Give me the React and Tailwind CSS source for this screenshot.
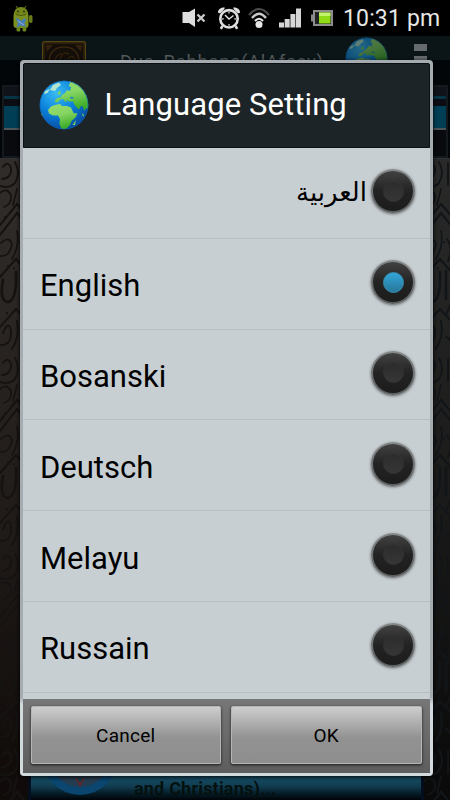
import React, { useState } from "react";

const languages = [
  { name: "العربية", rtl: true },
  { name: "English" },
  { name: "Bosanski" },
  { name: "Deutsch" },
  { name: "Melayu" },
  { name: "Russain" },
];

const Globe = ({ className, id }) => (
  <svg viewBox="0 0 50 50" className={className}>
    <defs>
      <radialGradient id={`${id}-sea`} cx="0.35" cy="0.25" r="0.8">
        <stop offset="0" stopColor="#3bbcf3" />
        <stop offset="0.5" stopColor="#0b83dc" />
        <stop offset="1" stopColor="#07489f" />
      </radialGradient>
      <linearGradient id={`${id}-land`} x1="0" y1="0" x2="0.3" y2="1">
        <stop offset="0" stopColor="#97dd72" />
        <stop offset="0.5" stopColor="#86d562" />
        <stop offset="1" stopColor="#3fae2a" />
      </linearGradient>
      <clipPath id={`${id}-clip`}>
        <circle cx="25" cy="25" r="24.3" />
      </clipPath>
    </defs>
    <circle cx="25" cy="25" r="24.3" fill={`url(#${id}-sea)`} />
    <g clipPath={`url(#${id}-clip)`}>
      {/* europe and asia */}
      <path
        d="M30 0 L31 3 L29.500 6 L32 7 L31 11 L28 10 L26 13 L23 15 L21.500 17.500 L18.500 18 L16 20 L16.500 22.500 L19 22 L21.500 19.500 L24 19 L26 21.500 L28 22 L27 19.500 L30 21.500 L34 21.500 L35 24 L38 28 L40 29.500 L41.500 26.500 L43.500 26 L45.500 31 L47 28 L50 30 L50 6 L40 0 Z"
        fill={`url(#${id}-land)`}
      />
      {/* africa */}
      <path
        d="M12 26.500 L16 25 L21 24 L23 26 L28 26 L32 27.500 L34.500 33 L38.500 33.500 L36.500 37.500 L32.500 41 L31 45 L27 49 L22.500 49 L20.500 44 L21 39 L19 35.500 L14 35.500 L10 33.500 L9 30 Z"
        fill={`url(#${id}-land)`}
      />
      <path d="M14 5 L20 2.500 L22 5 L18 8 L16 11 L11 10 Z M6 11 L11 9 L8.500 13 L5 14 Z" fill="#b5e5cf" />
      <path d="M18.500 13 L21 10.500 L22 14 L19.500 15 Z M33.500 45 L37 40 L36 45 Z M43 33 L45 35 L44 37 Z M1 32 L4 35 L3 38 Z" fill="#79d159" />
      <path d="M31 17.500 L34.500 18" stroke="#1b84c8" strokeWidth="1.4" />
    </g>
    <circle cx="25" cy="25" r="24" fill="none" stroke="#0b62b4" strokeOpacity="0.6" />
  </svg>
);

const StatusBar = () => (
  <div className="h-9 bg-black flex items-center shrink-0">
    <svg viewBox="0 0 21 27" className="w-[21px] h-[27px] ml-3">
      <path d="M4 1 L6 4 M14 1 L12 4" stroke="#6b8217" />
      <path d="M1.5 11 Q2 2 9 2 Q16 2 16.5 11 Z" fill="#72861c" />
      <rect x="1.5" y="9" width="15" height="14" rx="3" fill="#7a9020" />
      <rect x="17" y="10" width="3.5" height="8" rx="1.7" fill="#677b18" />
      <rect x="4.500" y="21" width="3.800" height="5.5" rx="1.5" fill="#6d841b" />
      <rect x="10.500" y="21" width="3.800" height="5.5" rx="1.5" fill="#6d841b" />
      <circle cx="6" cy="6.500" r="0.9" fill="#24300b" />
      <circle cx="12" cy="6.500" r="0.9" fill="#24300b" />
      <path d="M4 9.500 Q9 11.500 14 9.500" fill="none" stroke="#47560f" />
      <path d="M3.5 13 L7 14 L9 16 L12 13.500 L14.500 14 L12.500 18 L14 22 L9 20.500 L4.500 22.500 L6 18 Z" fill="#477dbb" />
      <path d="M6 16 L12 20" stroke="#8fb5d8" />
    </svg>
    <svg viewBox="0 0 24 20" className="w-6 h-5 ml-[149px]">
      <path d="M0.500 4 H7 L13 0.500 V19 L7 15 H0.500 Z" fill="#dedede" />
      <path d="M15.5 6.500 L22.5 13.500 M22.5 6.500 L15.5 13.500" stroke="#c9c9c9" strokeWidth="2.4" />
    </svg>
    <svg viewBox="0 0 24 24" className="w-6 h-6 ml-[11px]" fill="none" stroke="#dedede">
      <circle cx="12" cy="12.800" r="8.700" strokeWidth="2.600" />
      <path d="M8 9 L12 13 L16.500 9.500" strokeWidth="1.500" />
      <path d="M12 6 V7.500 M5 12.800 H6.700 M17.300 12.800 H19 M12 18 V19.700" strokeWidth="1.200" />
      <path d="M0.800 6.500 Q1.500 1.500 7.500 1.300 L7.500 3 L3 7.500 Z M23.200 6.500 Q22.500 1.500 16.500 1.300 L16.500 3 L21 7.500 Z" fill="#dedede" stroke="none" />
      <path d="M5.500 20 L3.800 22.800 M18.500 20 L20.200 22.800" strokeWidth="2.600" />
    </svg>
    <svg viewBox="0 0 22 22" className="w-[22px] h-[22px] ml-[7px]" fill="none">
      <path d="M1 8 Q11 -4 21 8" stroke="#4c4c4c" strokeWidth="2.200" />
      <path d="M4 11 Q11 2.500 18 11" stroke="#c9c9c9" strokeWidth="2.400" />
      <path d="M7 14 Q11 9.500 15 14" stroke="#e6e6e6" strokeWidth="2.200" />
      <circle cx="11" cy="17.500" r="3.500" fill="#e6e6e6" />
    </svg>
    <svg viewBox="0 0 22 20" className="w-[22px] h-5 ml-[9px]" fill="#d6d6d6">
      <rect x="0" y="14.500" width="5" height="5" />
      <rect x="5.700" y="11" width="5" height="8.500" />
      <rect x="11.400" y="6" width="5" height="13.500" />
      <rect x="17" y="0.500" width="5" height="19" />
    </svg>
    <svg viewBox="0 0 22 16" className="w-[22px] h-4 ml-[10px]">
      <rect x="0" y="4.500" width="3" height="7" fill="#888" />
      <rect x="3" y="1" width="18" height="14" fill="#222" stroke="#8c8c8c" strokeWidth="2" />
      <rect x="8" y="2.500" width="11.500" height="11" fill="#8fdb16" />
      <rect x="8" y="2.500" width="11.500" height="3.500" fill="#c3f26c" />
    </svg>
    <span className="ml-[10px] pt-[1px] text-[23px] leading-9 tracking-[0.15px] text-[#e6e6e6] whitespace-nowrap">
      10:31 pm
    </span>
  </div>
);

// faded calligraphy wallpaper on both sides of the dialog
const Calligraphy = ({ id, color }) => (
  <svg className="w-full h-full" aria-hidden="true">
    <defs>
      <pattern id={id} width="30" height="196" patternUnits="userSpaceOnUse">
        <g fill="none" stroke={color} strokeLinecap="round">
          <path d="M3 8 Q8 1 11 9 Q12 19 2 20 M15 3 Q21 14 15 24 Q9 30 0 27" strokeWidth="2" />
          <path d="M0 34 Q7 28 11 36 Q12 45 4 48 M17 30 L13 46" strokeWidth="1.800" />
          <path d="M0 66 L17 45 L30 60 M0 76 L17 54 L30 70" strokeWidth="2.200" />
          <path d="M1 84 Q10 76 12 86 Q9 98 1 97 M17 72 Q20 86 12 100" strokeWidth="1.800" />
          <path d="M0 118 L16 100 L30 116" strokeWidth="2.400" />
          <path d="M3 121 Q-1 142 8 143 Q17 142 16 113 M22 112 L22 140" strokeWidth="2.800" />
          <path d="M0 168 L16 150 L30 165 M3 174 Q9 160 11 172 Q12 186 1 186" strokeWidth="2" />
          <path d="M17 162 Q20 178 12 190 M8 107 V107.500 M14 109 V109.500 M20 83 V83.500 M5 58 V58.500 M7 154 V154.500" strokeWidth="2.200" />
          <path d="M24 4 V26 M28 4 V28 M23 80 Q30 90 24 102 M26 146 L22 156 M22 178 Q30 182 27 192" strokeWidth="2" />
        </g>
      </pattern>
    </defs>
    <rect width="100%" height="100%" fill={`url(#${id})`} />
  </svg>
);

const Background = () => (
  <div className="flex flex-col flex-1 min-h-0 bg-[#020608]">
    <div className="h-6 bg-[#0b1517] flex items-start shrink-0">
      <svg viewBox="0 0 44 19" className="w-11 h-[19px] mt-[5px] ml-[42px]">
        <rect x="0.700" y="0.700" width="42.600" height="30" rx="2" fill="#120d08" stroke="#594713" strokeWidth="1.400" />
        <path d="M2.500 19 V2.500 H41.500 V19" fill="none" stroke="#281c0f" strokeWidth="1.500" />
        <path d="M7 19 Q9 6 22 6 Q35 6 37 19" fill="#140e09" stroke="#3b270f" strokeWidth="1.300" />
        <path d="M4 4 L11 4 L5 11 Z M40 4 L33 4 L39 11 Z" fill="#33220f" />
        <path d="M13 19 Q15 12 20 13 M18 18 Q22 9 27 13 M26 18 Q30 12 33 18" fill="none" stroke="#3d280e" />
      </svg>
      <span className="ml-[34px] mt-[15px] text-[18.500px] leading-[22px] tracking-[0.700px] text-[#54595b] whitespace-nowrap w-[206px]">
        Dua_Rabbana(AlAfasy)
      </span>
      <Globe id="bar" className="w-[43px] h-[43px] mt-[1px] ml-[19px] opacity-50 shrink-0" />
      <div className="flex flex-col gap-[5px] mt-[8px] ml-[26px]">
        <div className="w-[13px] h-[7px] bg-[#666a6c]" />
        <div className="w-[13px] h-[7px] bg-[#666a6c]" />
      </div>
    </div>

    <div className="mt-[25px] mx-[2px] h-[73px] border-2 border-[#14191e] bg-[#080a0e] flex flex-col shrink-0">
      <div className="h-[9px] bg-[#101319]" />
      <div className="h-[3px] bg-[#053544]" />
      <div className="h-[7px] bg-[#0b0d12]" />
      <div className="h-[22px] bg-[#003e55]" />
      <div className="h-[2px] bg-[#4c5559]" />
    </div>

    <div className="flex-1 min-h-0 flex justify-between border-t border-[#2f3133] bg-linear-to-b from-[#363533] via-[#242220] to-[#0c0a09]">
      <div className="w-[28px] h-full bg-[#1c0f08]/20">
        <Calligraphy id="cal-left" color="#151312" />
      </div>
      <div className="flex-1 flex flex-col justify-end">
        <div className="h-[34px] border-x-[3px] border-[#020d1e] bg-linear-to-b from-[#175069] from-30% via-[#113c50] via-60% to-[#010508] flex overflow-hidden">
          <svg viewBox="0 0 70 34" className="w-[70px] h-[34px] ml-[14px]">
            <circle cx="35" cy="-9" r="38" fill="#0a466f" />
            <circle cx="35" cy="-9" r="30" fill="#253d51" />
            <path d="M31 12 L35 19 L39 12" fill="#153a4a" stroke="#5b2a30" strokeWidth="2" />
          </svg>
          <span className="ml-[19px] mt-[13px] text-[18px] leading-[20px] tracking-[0.200px] font-bold text-[#04110f] whitespace-nowrap">
            and Christians)...
          </span>
        </div>
      </div>
      <div className="w-[26px] h-full bg-[#05090c]/25">
        <Calligraphy id="cal-right" color="#111518" />
      </div>
    </div>
  </div>
);

const Radio = ({ checked }) => (
  <span className="w-[44px] h-[44px] rounded-full p-[2px] bg-linear-to-b from-[#858989] to-[#5b5e5e] shadow-[0_1px_3px_rgba(0,0,0,0.55)] shrink-0 flex">
    <span className="flex-1 rounded-full bg-linear-to-b from-[#424242] via-[#232323] to-[#1c1c1c] flex items-center justify-center">
      <span
        className={`w-[21px] h-[21px] rounded-full border ${
          checked
            ? "bg-linear-to-b from-[#32a5d8] to-[#28779a] border-[#3790b4]"
            : "bg-linear-to-b from-[#2c2c2c] to-[#363636] border-[#343434]"
        }`}
      />
    </span>
  </span>
);

const DialogButton = ({ children }) => (
  <button className="flex-1 h-[58px] pt-[2px] rounded-[2px] border border-[#b5b5b5] bg-linear-to-b from-[#cecece] via-[#929292] via-55% to-[#8e8e8e] shadow-[0_1px_3px_rgba(0,0,0,0.75)] text-[19px] tracking-[0.250px] text-black">
    {children}
  </button>
);

const App = () => {
  const [selected, setSelected] = useState("English");

  return (
    <div className="relative w-[450px] h-[800px] overflow-hidden flex flex-col bg-black font-[Roboto,sans-serif]">
      <StatusBar />
      <Background />

      {/* dialog */}
      <div className="absolute left-[19.500px] top-[60px] w-[413.500px] h-[716px] rounded-[4px] bg-linear-to-b from-[#a5acb1] from-89% to-[#d3dadd] to-90% p-[3px] flex flex-col shadow-[0_1px_4px_#000]">
        <div className="h-[85px] shrink-0 rounded-t-[2px] bg-[#1d2427] border border-[#0c1012] flex items-center pl-[15px]">
          <Globe id="title" className="w-[50px] h-[50px] mt-[-1px] shrink-0" />
          <h1 className="ml-[16px] mt-[-2px] text-[31px] leading-[40px] tracking-[0.100px] text-white whitespace-nowrap">
            Language Setting
          </h1>
        </div>

        <ul className="h-[551px] shrink-0 bg-[#c8cfd3] overflow-hidden">
          {languages.map((lang) => (
            <li
              key={lang.name}
              onClick={() => setSelected(lang.name)}
              className="h-[90.800px] border-b border-[#b8bfc3] flex items-center pl-[17.500px] pr-[15px] pb-[3px] cursor-pointer"
            >
              <span
                dir={lang.rtl ? "rtl" : "ltr"}
                className={
                  lang.rtl
                    ? "flex-1 pr-[4px] pt-[2px] text-[26px] leading-[40px] text-black font-['DejaVu_Sans',sans-serif]"
                    : "flex-1 pt-[8px] text-[31px] leading-[40px] text-black"
                }
              >
                {lang.name}
              </span>
              <Radio checked={selected === lang.name} />
            </li>
          ))}
        </ul>

        <div className="flex-1 bg-linear-to-b from-[#777] to-[#5d5d5d] flex gap-[10px] pt-[7px] pl-[8px] pr-[8.500px]">
          <DialogButton>Cancel</DialogButton>
          <DialogButton>OK</DialogButton>
        </div>
      </div>
    </div>
  );
};

export default App;
